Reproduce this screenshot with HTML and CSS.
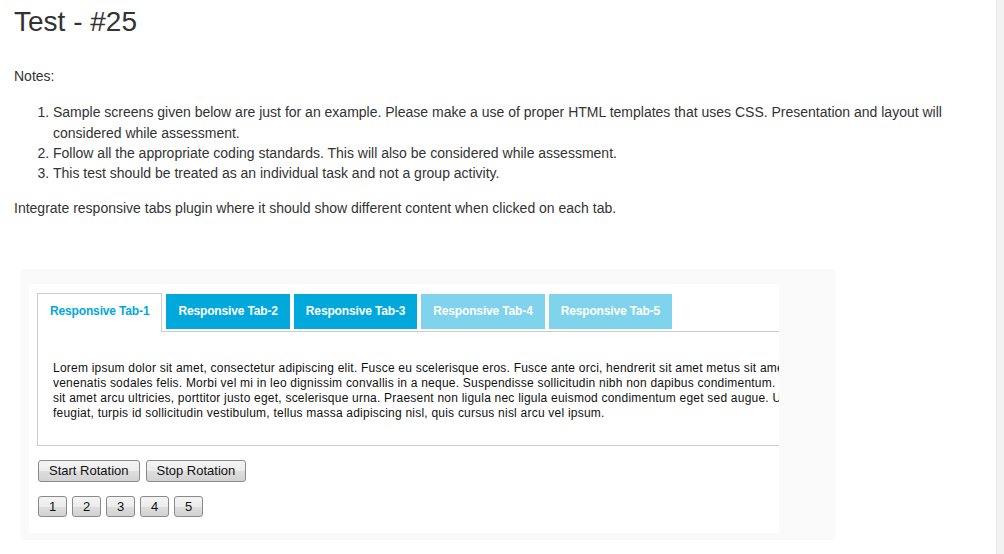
FILE: index.html
```html
<!DOCTYPE html>
<html lang="en">
<head>
<meta charset="utf-8">
<title>Test - #25</title>
<link rel="stylesheet" href="styles.css">
</head>
<body>
<main class="page">
  <h1 class="title">Test - #25</h1>
  <p class="notes">Notes:</p>
  <ol class="rules">
    <li>Sample screens given below are just for an example. Please make a use of proper HTML templates that uses CSS. Presentation and layout will considered while assessment.</li>
    <li>Follow all the appropriate coding standards. This will also be considered while assessment.</li>
    <li>This test should be treated as an individual task and not a group activity.</li>
  </ol>
  <p class="intro">Integrate responsive tabs plugin where it should show different content when clicked on each tab.</p>

  <section class="demo">
    <div class="demo-inner">
      <div class="tabs">
        <div class="tablist">
          <span class="tab active">Responsive Tab-1</span>
          <span class="tab">Responsive Tab-2</span>
          <span class="tab">Responsive Tab-3</span>
          <span class="tab faded">Responsive Tab-4</span>
          <span class="tab faded">Responsive Tab-5</span>
        </div>
        <div class="tabpanel">
          <p class="panel-text">Lorem ipsum dolor sit amet, consectetur adipiscing elit. Fusce eu scelerisque eros. Fusce ante orci, hendrerit sit amet metus sit amet,<br>venenatis sodales felis. Morbi vel mi in leo dignissim convallis in a neque. Suspendisse sollicitudin nibh non dapibus condimentum. Ut<br>sit amet arcu ultricies, porttitor justo eget, scelerisque urna. Praesent non ligula nec ligula euismod condimentum eget sed augue. Ut<br>feugiat, turpis id sollicitudin vestibulum, tellus massa adipiscing nisl, quis cursus nisl arcu vel ipsum.</p>
        </div>
      </div>
      <div class="controls">
        <button class="btn btn-wide" type="button">Start Rotation</button>
        <button class="btn btn-wide" type="button">Stop Rotation</button>
      </div>
      <div class="controls pager">
        <button class="btn btn-num" type="button">1</button>
        <button class="btn btn-num" type="button">2</button>
        <button class="btn btn-num" type="button">3</button>
        <button class="btn btn-num" type="button">4</button>
        <button class="btn btn-num" type="button">5</button>
      </div>
    </div>
  </section>
</main>
<div class="scroll-track"></div>
</body>
</html>
```

FILE: styles.css
```css
html, body {
  margin: 0;
  padding: 0;
}

body {
  display: flex;
  min-height: 100vh;
  background: #fff;
  color: #333;
  font-family: "Liberation Sans", Arial, Helvetica, sans-serif;
  font-size: 14px;
  line-height: 20.3px;
  overflow: hidden;
}

.page {
  flex: 1;
  min-width: 0;
  padding: 0 14px;
}

.scroll-track {
  width: 7px;
  flex: none;
  background: #f2f2f2;
  border-left: 1px solid #e8e8e8;
}

.title {
  margin: 7px 0 29px;
  font-size: 28px;
  font-weight: normal;
  line-height: 30px;
  color: #333;
}

.notes {
  margin: 0 0 16px;
}

.rules {
  margin: 0 0 15px;
  padding-left: 39px;
}

.intro {
  margin: 0;
}

.demo {
  width: 750px;
  margin: 50px 0 0 7px;
  padding: 15px 56px 7px 8px;
  background: #fafafa;
}

.demo-inner {
  height: 249px;
  box-sizing: border-box;
  padding: 9px 0 16px 8px;
  background: #fff;
  overflow: hidden;
}

.tabs {
  width: 820px;
}

.tablist {
  display: flex;
  align-items: flex-start;
  gap: 4px;
  border-bottom: 1px solid #ccc;
}

.tab {
  margin: 1px 0 2px;
  padding: 0 12px;
  height: 35px;
  line-height: 35px;
  background: #00a8dc;
  color: #fff;
  font-size: 12px;
  font-weight: bold;
  letter-spacing: -0.15px;
  white-space: nowrap;
}

.tab.faded {
  background: #80d3ed;
}

.tab.active {
  margin: 0 0 -1px;
  height: 38px;
  border: 1px solid #ccc;
  border-bottom: 0;
  background: #fff;
  color: #00a8dc;
}

.tabpanel {
  border: 1px solid #ccc;
  border-top: 0;
  padding: 29px 15px 24px;
}

.panel-text {
  margin: 0;
  font-size: 12px;
  line-height: 15px;
  letter-spacing: 0.22px;
  color: #111;
  white-space: nowrap;
}

.controls {
  display: flex;
  gap: 6px;
  margin-top: 14px;
  padding-left: 1px;
}

.pager {
  gap: 5px;
}

.btn {
  margin: 0;
  box-sizing: border-box;
  border: 1px solid #8a8a8a;
  border-radius: 3px;
  background: linear-gradient(#f4f4f4 0%, #ececec 50%, #dedede 51%, #d2d2d2 100%);
  color: #111;
  font-family: "Liberation Sans", Arial, sans-serif;
  font-size: 13px;
  cursor: pointer;
}

.btn-wide {
  height: 22px;
  padding: 0 10px;
  line-height: 18px;
}

.btn-num {
  width: 29px;
  height: 21px;
  padding: 0;
  line-height: 17px;
}
```
